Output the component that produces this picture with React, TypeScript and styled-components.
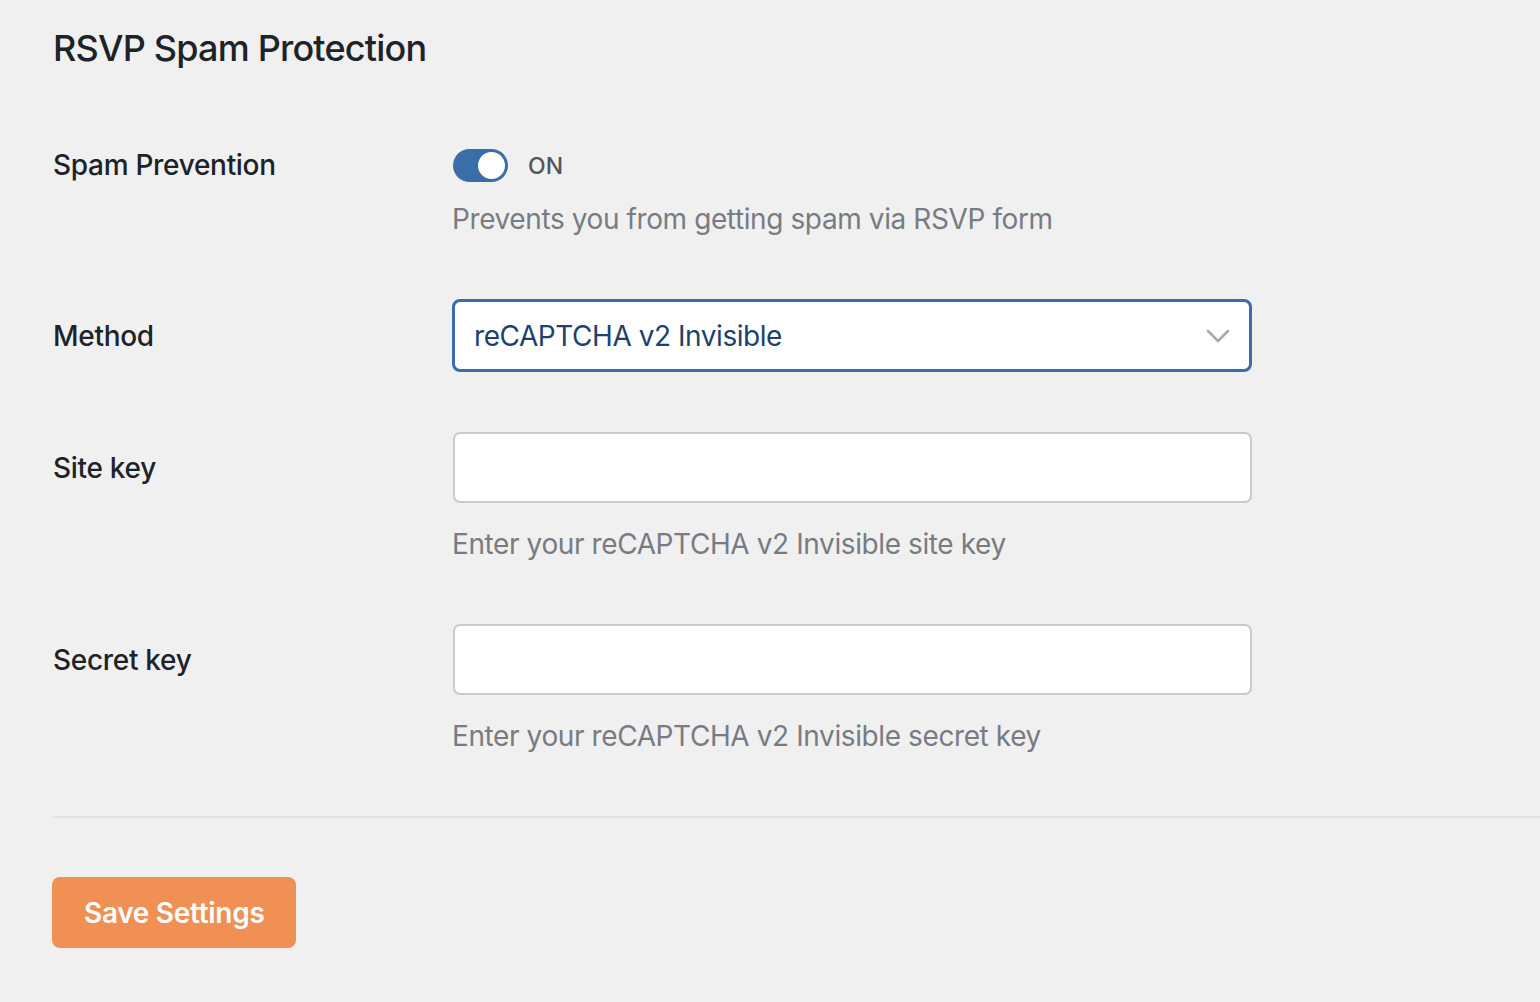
import React, { useState } from 'react'
import styled, { createGlobalStyle } from 'styled-components'

const GlobalStyle = createGlobalStyle`
  html, body {
    margin: 0;
    padding: 0;
    background: #f0f0f1;
  }
  body {
    font-family: Inter, "Noto Sans", sans-serif;
    color: #1d2327;
  }
`

const Page = styled.div`
  padding: 27px 0 40px 53px;
  min-height: 100vh;
  box-sizing: border-box;
`
const Title = styled.h2`
  margin: 0 0 75px;
  font-size: 36px;
  line-height: 43px;
  font-weight: 500;
  letter-spacing: -0.8px;
  color: #1d2327;
`
const Rows = styled.div`
  display: flex;
  flex-direction: column;
  gap: 60px;
`
const Row = styled.div`
  display: grid;
  grid-template-columns: 399px 800px;
  grid-template-areas:
    "label control"
    ".     desc";
  align-items: center;
`
const Label = styled.label`
  grid-area: label;
  font-size: 28px;
  line-height: 40px;
  font-weight: 500;
  letter-spacing: -0.3px;
  color: #1d2327;
`
const Control = styled.div`
  grid-area: control;
  display: flex;
  align-items: center;
`
const Description = styled.p<{ gap: number }>`
  grid-area: desc;
  margin: ${({ gap }) => gap}px 0 0;
  font-size: 28px;
  line-height: 40px;
  letter-spacing: -0.4px;
  color: #787c82;
`
const Switch = styled.button<{ on: boolean }>`
  all: unset;
  box-sizing: border-box;
  width: 55px;
  height: 33px;
  border-radius: 17px;
  background: ${({ on }) => (on ? '#3a6ea8' : '#a7aaad')};
  padding: 3px;
  display: flex;
  justify-content: ${({ on }) => (on ? 'flex-end' : 'flex-start')};
  cursor: pointer;
  margin-left: 1px;
  &::after {
    content: '';
    width: 27px;
    height: 27px;
    border-radius: 50%;
    background: #fff;
  }
`
const SwitchText = styled.span`
  margin-left: 20px;
  padding-top: 2px;
  font-size: 23px;
  font-weight: 500;
  color: #50575e;
`
const SelectBox = styled.div`
  box-sizing: border-box;
  width: 800px;
  height: 73px;
  border: 3px solid #3a6ea8;
  border-radius: 8px;
  background: #fff;
  display: flex;
  align-items: center;
  justify-content: space-between;
  padding: 0 19px 0 19px;
  cursor: pointer;
`
const SelectValue = styled.span`
  font-size: 28px;
  letter-spacing: -0.45px;
  color: #1e416c;
`
const TextInput = styled.input`
  box-sizing: border-box;
  width: 799px;
  height: 71px;
  margin-left: 1px;
  border: 2px solid #c9cacd;
  border-radius: 7px;
  background: #fff;
  font: inherit;
  font-size: 28px;
  padding: 0 20px;
  outline: none;
`
const Divider = styled.hr`
  margin: 60px 0 0 -1px;
  border: none;
  border-top: 2px solid #e2e2e3;
`
const SaveButton = styled.button`
  margin: 59px 0 0 -1px;
  height: 71px;
  padding: 0 32px;
  border: none;
  border-radius: 8px;
  background: #f09054;
  color: #fff;
  font-family: inherit;
  font-size: 28px;
  font-weight: 600;
  letter-spacing: -0.3px;
  cursor: pointer;
`

const Chevron = () => (
  <svg width="24" height="14" viewBox="0 0 24 14" fill="none">
    <path d="M2 2l10 10L22 2" stroke="#a7aaad" strokeWidth="2.5" strokeLinecap="round" strokeLinejoin="round" />
  </svg>
)

export default function App() {
  const [enabled, setEnabled] = useState(true)
  return (
    <Page>
      <GlobalStyle />
      <Title>RSVP Spam Protection</Title>
      <Rows>
        <Row>
          <Label>Spam Prevention</Label>
          <Control>
            <Switch on={enabled} onClick={() => setEnabled(!enabled)} />
            <SwitchText>{enabled ? 'ON' : 'OFF'}</SwitchText>
          </Control>
          <Description gap={14}>Prevents you from getting spam via RSVP form</Description>
        </Row>
        <Row>
          <Label>Method</Label>
          <Control>
            <SelectBox>
              <SelectValue>reCAPTCHA v2 Invisible</SelectValue>
              <Chevron />
            </SelectBox>
          </Control>
        </Row>
        <Row>
          <Label>Site key</Label>
          <Control>
            <TextInput type="text" />
          </Control>
          <Description gap={21}>Enter your reCAPTCHA v2 Invisible site key</Description>
        </Row>
        <Row>
          <Label>Secret key</Label>
          <Control>
            <TextInput type="text" />
          </Control>
          <Description gap={21}>Enter your reCAPTCHA v2 Invisible secret key</Description>
        </Row>
      </Rows>
      <Divider />
      <SaveButton>Save Settings</SaveButton>
    </Page>
  )
}
